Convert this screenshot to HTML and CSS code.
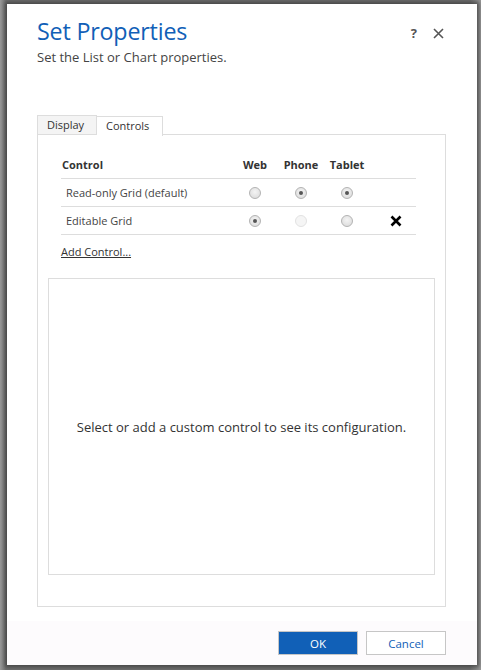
FILE: index.html
```html
<!DOCTYPE html>
<html>
<head>
<meta charset="utf-8">
<link rel="stylesheet" href="styles.css">
</head>
<body>
<div class="backdrop">
  <div class="dialog">
    <div class="header">
      <div class="titles">
        <h1 class="title">Set Properties</h1>
        <div class="subtitle">Set the List or Chart properties.</div>
      </div>
      <div class="header-icons">
        <span class="help">?</span>
        <svg class="close" width="11" height="11" viewBox="0 0 11 11"><path d="M1 1L10 10M10 1L1 10" stroke="#555" stroke-width="1.6"/></svg>
      </div>
    </div>
    <div class="content">
      <div class="tabs">
        <div class="tab">Display</div>
        <div class="tab active">Controls</div>
      </div>
      <div class="panel">
        <div class="grid">
          <div class="row head">
            <div class="c-name">Control</div>
            <div class="c-col">Web</div>
            <div class="c-col">Phone</div>
            <div class="c-col">Tablet</div>
            <div class="c-x"></div>
          </div>
          <div class="row">
            <div class="c-name item">Read-only Grid (default)</div>
            <div class="c-col"><span class="radio"></span></div>
            <div class="c-col"><span class="radio on"></span></div>
            <div class="c-col"><span class="radio on"></span></div>
            <div class="c-x"></div>
          </div>
          <div class="row">
            <div class="c-name item">Editable Grid</div>
            <div class="c-col"><span class="radio on"></span></div>
            <div class="c-col"><span class="radio off"></span></div>
            <div class="c-col"><span class="radio"></span></div>
            <div class="c-x"><svg width="12" height="12" viewBox="0 0 12 12"><path d="M1.5 1.5L10.5 10.5M10.5 1.5L1.5 10.5" stroke="#000" stroke-width="2.6"/></svg></div>
          </div>
        </div>
        <a class="add" href="#">Add Control...</a>
        <div class="config">Select or add a custom control to see its configuration.</div>
      </div>
    </div>
    <div class="footer">
      <button class="btn primary">OK</button>
      <button class="btn">Cancel</button>
    </div>
  </div>
</div>
</body>
</html>
```
FILE: styles.css
```css
html, body {
  margin: 0;
  padding: 0;
}
body {
  width: 481px;
  height: 670px;
  overflow: hidden;
  background: #8a8a8a;
  font-family: "Open Sans", "Noto Sans", sans-serif;
}
.backdrop {
  display: flex;
  padding: 4px 4px 5px 7px;
  height: 670px;
  box-sizing: border-box;
  background: linear-gradient(to right, #9a9a9a, #6f6f6f 6px, #6f6f6f 470px, #9a9a9a);
}
.dialog {
  width: 470px;
  height: 661px;
  background: #fff;
  display: flex;
  flex-direction: column;
  box-shadow: 0 0 4px 2px rgba(40,40,40,0.6);
}
.header {
  display: flex;
  justify-content: space-between;
  padding: 12px 33px 0 30px;
  height: 95px;
  box-sizing: border-box;
}
.title {
  margin: 0;
  font-weight: normal;
  font-size: 23.3px;
  line-height: 30px;
  color: #1160b7;
  letter-spacing: -0.2px;
}
.subtitle {
  font-size: 13px;
  color: #444;
  margin-top: 3px;
  line-height: 17px;
}
.header-icons {
  display: flex;
  align-items: center;
  gap: 16px;
  height: 20px;
  margin-top: 7px;
}
.help {
  font-size: 13px;
  font-weight: bold;
  color: #555;
}
.content {
  padding: 16px 31px 0 30px;
  flex: 1;
}
.tabs {
  display: flex;
  height: 19px;
}
.tab {
  font-size: 11px;
  line-height: 17px;
  color: #333;
  border: 1px solid #ddd;
  border-bottom: none;
  background: #f4f4f4;
  padding: 0 9px 0 9px;
  width: 40px;
}
.tab.active {
  background: #fff;
  width: 47px;
  border-left: none;
  position: relative;
  top: 1px;
  height: 19px;
}
.panel {
  border: 1px solid #ddd;
  height: 473px;
  box-sizing: border-box;
  padding: 16px 10px 0 10px;
  display: flex;
  flex-direction: column;
}
.grid {
  margin-left: 13px;
  width: 355px;
}
.row {
  display: grid;
  grid-template-columns: 171px 46px 46px 46px 1fr;
  height: 28px;
  align-items: center;
  border-bottom: 1px solid #ddd;
  box-sizing: border-box;
  font-size: 11px;
  color: #333;
}
.row.head {
  font-weight: bold;
  color: #333;
}
.c-name {
  padding-left: 1px;
}
.c-name.item {
  padding-left: 5px;
  color: #444;
}
.c-col {
  text-align: center;
  display: flex;
  justify-content: center;
}
.c-x {
  display: flex;
  justify-content: center;
  padding-left: 6px;
}
.radio {
  width: 12px;
  height: 12px;
  border-radius: 50%;
  border: 1px solid #b3b3b3;
  background: radial-gradient(circle at 50% 40%, #f4f4f4, #d8d8d8);
  box-sizing: border-box;
  position: relative;
}
.radio.on::after {
  content: "";
  position: absolute;
  left: 3px;
  top: 3px;
  width: 4px;
  height: 4px;
  border-radius: 50%;
  background: #555;
}
.radio.off {
  border-color: #e2e2e2;
  background: #f5f5f5;
}
.add {
  margin-left: 13px;
  margin-top: 9px;
  font-size: 11px;
  color: #333;
  text-decoration: underline;
  line-height: 16px;
  align-self: flex-start;
}
.config {
  margin-top: 18px;
  height: 297px;
  border: 1px solid #ddd;
  box-sizing: border-box;
  display: flex;
  align-items: center;
  justify-content: center;
  font-size: 13px;
  color: #333;
}
.footer {
  height: 44px;
  background: #fdfbfd;
  display: flex;
  justify-content: flex-end;
  align-items: flex-start;
  gap: 8px;
  padding: 10px 31px 0 0;
  box-sizing: border-box;
}
.btn {
  width: 80px;
  height: 24px;
  border: 1px solid #c6c6c6;
  background: #fff;
  color: #1160b7;
  font-family: "Open Sans", "Noto Sans", sans-serif;
  font-size: 11.5px;
  padding: 0;
}
.btn.primary {
  background: #1160b7;
  color: #fff;
}
```
